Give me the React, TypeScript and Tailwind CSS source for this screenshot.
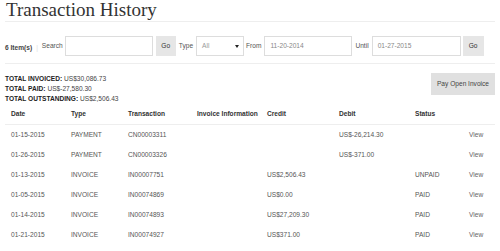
import React from "react";

type Row = {
  date: string;
  type: string;
  txn: string;
  info: string;
  credit: string;
  debit: string;
  status: string;
};

const rows: Row[] = [
  { date: "01-15-2015", type: "PAYMENT", txn: "CN00003311", info: "", credit: "", debit: "US$-26,214.30", status: "" },
  { date: "01-26-2015", type: "PAYMENT", txn: "CN00003326", info: "", credit: "", debit: "US$-371.00", status: "" },
  { date: "01-13-2015", type: "INVOICE", txn: "IN00007751", info: "", credit: "US$2,506.43", debit: "", status: "UNPAID" },
  { date: "01-05-2015", type: "INVOICE", txn: "IN00074869", info: "", credit: "US$0.00", debit: "", status: "PAID" },
  { date: "01-14-2015", type: "INVOICE", txn: "IN00074893", info: "", credit: "US$27,209.30", debit: "", status: "PAID" },
  { date: "01-21-2015", type: "INVOICE", txn: "IN00074927", info: "", credit: "US$371.00", debit: "", status: "PAID" },
];

const cols = "grid grid-cols-[60px_57px_69px_70px_72px_76px_54px_1fr] whitespace-nowrap";

export default function App() {
  return (
    <div className="w-[500px] h-[251px] overflow-hidden bg-white font-['Liberation_Sans',Arial,sans-serif] text-[6.6px] text-[#555]">
      <div className="px-[5px]">
        <h1 className="h-[22px] pl-[1px] border-b border-[#eee] font-['Liberation_Serif','Times_New_Roman',serif] text-[19px] leading-[19px] text-[#333]">
          Transaction History
        </h1>

        {/* filters */}
        <div className="mt-[14px] flex h-[20px] items-center whitespace-nowrap">
          <span className="mt-[3px] font-bold text-[#444]">6 Item(s)</span>
          <span className="ml-[4px] mt-[3px] text-[#ddd]">|</span>
          <span className="ml-[4px]">Search</span>
          <div className="ml-[2px] h-[20px] w-[88px] border border-[#ddd] bg-white" />
          <button className="ml-[3px] h-[20px] w-[20px] bg-[#e6e6e6] text-[#333]">Go</button>
          <span className="ml-[3px]">Type</span>
          <div className="ml-[3px] flex h-[20px] w-[48px] items-center justify-between border border-[#ddd] bg-white pl-[5px] pr-[4px] text-[#999]">
            <span>All</span>
            <svg width="4" height="3" viewBox="0 0 4 3">
              <path d="M0 0h4L2 3z" fill="#222" />
            </svg>
          </div>
          <span className="ml-[2px]">From</span>
          <div className="ml-[3px] flex h-[20px] w-[88px] items-center border border-[#ddd] bg-white pl-[5px] text-[#888]">11-20-2014</div>
          <span className="ml-[3px]">Until</span>
          <div className="ml-[3px] flex h-[20px] w-[89px] items-center border border-[#ddd] bg-white pl-[5px] text-[#888]">01-27-2015</div>
          <button className="ml-[2px] h-[20px] w-[21px] bg-[#e6e6e6] text-[#333]">Go</button>
        </div>

        <div className="mt-[7px] border-t border-[#eee]" />

        {/* totals */}
        <div className="flex justify-between pt-[10px]">
          <div className="leading-[10px] text-[#444]">
            <div><b className="text-[#222]">TOTAL INVOICED:</b> US$30,086.73</div>
            <div><b className="text-[#222]">TOTAL PAID:</b> US$-27,580.30</div>
            <div><b className="text-[#222]">TOTAL OUTSTANDING:</b> US$2,506.43</div>
          </div>
          <button className="-mt-[1px] h-[22px] w-[64px] bg-[#e0e0e0] text-[#444]">Pay Open Invoice</button>
        </div>

        {/* table */}
        <div className={`${cols} h-[21px] items-center border-b border-[#eee] font-bold text-[#333]`}>
          <div className="pl-[6px]">Date</div>
          <div className="pl-[6px]">Type</div>
          <div className="pl-[6px]">Transaction</div>
          <div className="pl-[6px]">Invoice Information</div>
          <div className="pl-[6px]">Credit</div>
          <div className="pl-[6px]">Debit</div>
          <div className="pl-[6px]">Status</div>
          <div />
        </div>
        {rows.map((r) => (
          <div key={r.txn} className={`${cols} h-[20px] items-center`}>
            <div className="pl-[6px]">{r.date}</div>
            <div className="pl-[6px]">{r.type}</div>
            <div className="pl-[6px]">{r.txn}</div>
            <div className="pl-[6px]">{r.info}</div>
            <div className="pl-[6px]">{r.credit}</div>
            <div className="pl-[6px]">{r.debit}</div>
            <div className="pl-[6px]">{r.status}</div>
            <div className="pl-[6px] text-[#666]">View</div>
          </div>
        ))}
      </div>
    </div>
  );
}
